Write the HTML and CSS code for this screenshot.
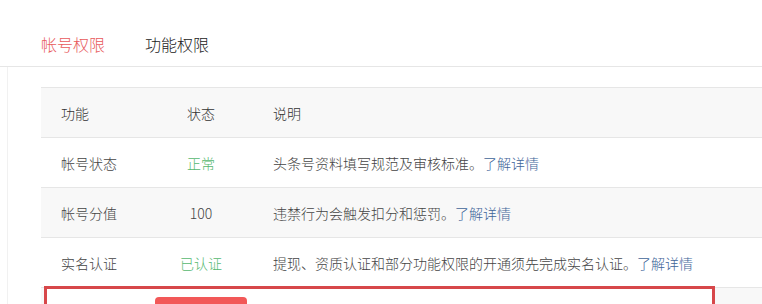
FILE: index.html
```html
<!DOCTYPE html>
<html lang="zh-CN">
<head>
<meta charset="utf-8">
<title>权限</title>
<link rel="stylesheet" href="styles.css">
</head>
<body>
<div class="page">
  <div class="tabs">
    <span class="tab active">帐号权限</span>
    <span class="tab">功能权限</span>
  </div>
  <div class="content">
    <div class="table">
      <div class="row head">
        <div class="c1">功能</div>
        <div class="c2">状态</div>
        <div class="c3">说明</div>
      </div>
      <div class="row">
        <div class="c1">帐号状态</div>
        <div class="c2 ok">正常</div>
        <div class="c3">头条号资料填写规范及审核标准。<a class="link">了解详情</a></div>
      </div>
      <div class="row alt">
        <div class="c1">帐号分值</div>
        <div class="c2">100</div>
        <div class="c3">违禁行为会触发扣分和惩罚。<a class="link">了解详情</a></div>
      </div>
      <div class="row">
        <div class="c1">实名认证</div>
        <div class="c2 ok">已认证</div>
        <div class="c3">提现、资质认证和部分功能权限的开通须先完成实名认证。<a class="link">了解详情</a></div>
      </div>
      <div class="row alt last">
        <div class="annot"><span class="btn"></span></div>
      </div>
    </div>
  </div>
</div>
</body>
</html>
```
FILE: styles.css
```css
html, body {
  margin: 0;
  padding: 0;
  background: #ffffff;
}
body {
  font-family: "Noto Sans CJK SC", "Noto Sans", "Liberation Sans", sans-serif;
  color: #444;
  overflow: hidden;
}
.page {
  width: 762px;
  height: 304px;
  overflow: hidden;
}
.tabs {
  display: flex;
  gap: 40px;
  height: 67px;
  box-sizing: border-box;
  padding: 34px 0 0 41px;
  border-bottom: 1px solid #e6e6e6;
}
.tab {
  font-size: 16px;
  line-height: 21px;
  color: #222;
  font-weight: 300;
}
.tab.active {
  color: #e85a5c;
}
.content {
  margin-left: 7px;
  border-left: 1px solid #f1f1f1;
  padding: 20px 0 0 33px;
  height: 260px;
}
.table {
  display: flex;
  flex-direction: column;
}
.row {
  display: flex;
  align-items: center;
  height: 49px;
  border-bottom: 1px solid #e6e6e6;
  font-size: 14px;
  line-height: 20px;
  font-weight: 300;
}
.row.head {
  border-top: 1px solid #e6e6e6;
  background: #f8f8f8;
  color: #333;
}
.row.alt {
  background: #f8f8f8;
}
.row.last {
  position: relative;
  border-bottom: none;
}
.c1 {
  width: 100px;
  box-sizing: border-box;
  padding-left: 20px;
}
.c2 {
  width: 120px;
  text-align: center;
}
.c3 {
  padding-left: 12px;
}
.ok {
  color: #56b870;
}
.link {
  color: #406599;
  text-decoration: none;
}
.annot {
  position: absolute;
  left: 3px;
  top: -2px;
  width: 671px;
  height: 60px;
  box-sizing: border-box;
  border: 3px solid #d7474a;
  background: #ffffff;
}
.btn {
  position: absolute;
  left: 108px;
  top: 8px;
  width: 92px;
  height: 32px;
  border-radius: 4px;
  background: #f25858;
}
```
